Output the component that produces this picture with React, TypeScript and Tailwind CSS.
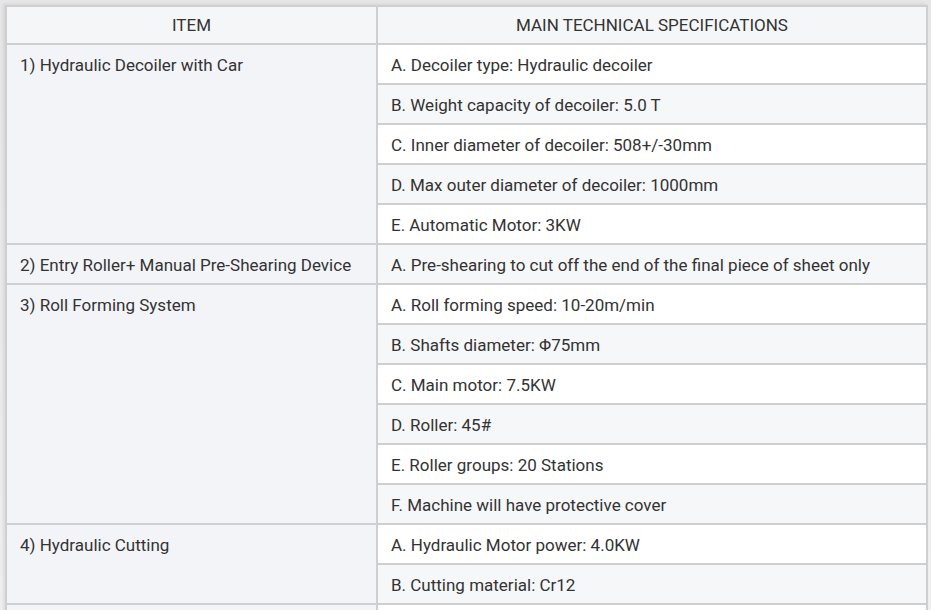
const groups = [
  {
    item: '1) Hydraulic Decoiler with Car',
    specs: [
      'A. Decoiler type: Hydraulic decoiler',
      'B. Weight capacity of decoiler: 5.0 T',
      'C. Inner diameter of decoiler: 508+/-30mm',
      'D. Max outer diameter of decoiler: 1000mm',
      'E. Automatic Motor: 3KW',
    ],
  },
  {
    item: '2) Entry Roller+ Manual Pre-Shearing Device',
    specs: ['A. Pre-shearing to cut off the end of the final piece of sheet only'],
  },
  {
    item: '3) Roll Forming System',
    specs: [
      'A. Roll forming speed: 10-20m/min',
      'B. Shafts diameter: Φ75mm',
      'C. Main motor: 7.5KW',
      'D. Roller: 45#',
      'E. Roller groups: 20 Stations',
      'F. Machine will have protective cover',
    ],
  },
  {
    item: '4) Hydraulic Cutting',
    specs: ['A. Hydraulic Motor power: 4.0KW', 'B. Cutting material: Cr12'],
  },
  // next group starts just below the fold
  { item: '', specs: [''] },
]

export default function App() {
  let rowIndex = 0
  return (
    <div
      className="h-[610px] overflow-hidden bg-white text-[17px] text-[#333]"
      style={{ fontFamily: 'Roboto, "Liberation Sans", sans-serif' }}
    >
      <div className="bg-gradient-to-b from-[#e6e6e6] to-[#f0f0f0] pt-[5px] pl-[5px] pr-[3px]">
        <table className="w-[923px] border-collapse border-2 border-[#cfcfcf] shadow-[-2px_-1px_3px_rgba(0,0,0,0.08)]">
          <thead>
            <tr className="h-[38px] bg-[#f5f6f8]">
              <th className="w-[371px] border-2 border-[#cfcfcf] font-normal text-center pt-[2px] pb-0">ITEM</th>
              <th className="border-2 border-[#cfcfcf] font-normal text-center pt-[2px] pb-0">
                MAIN TECHNICAL SPECIFICATIONS
              </th>
            </tr>
          </thead>
          <tbody>
            {groups.map((g) =>
              g.specs.map((s, i) => {
                const striped = rowIndex++ % 2 === 1
                return (
                  <tr key={g.item + i} className="h-[40px]">
                    {i === 0 && (
                      <td
                        rowSpan={g.specs.length}
                        className="border-2 border-[#cfcfcf] bg-[#f3f4f8] px-[13px] pt-[8px] align-top whitespace-nowrap"
                      >
                        {g.item}
                      </td>
                    )}
                    <td
                      className={`border-2 border-[#cfcfcf] px-[13px] pt-[4px] pb-0 whitespace-nowrap ${
                        striped ? 'bg-[#f6f7f9]' : 'bg-white'
                      }`}
                    >
                      {s}
                    </td>
                  </tr>
                )
              })
            )}
          </tbody>
        </table>
      </div>
    </div>
  )
}
